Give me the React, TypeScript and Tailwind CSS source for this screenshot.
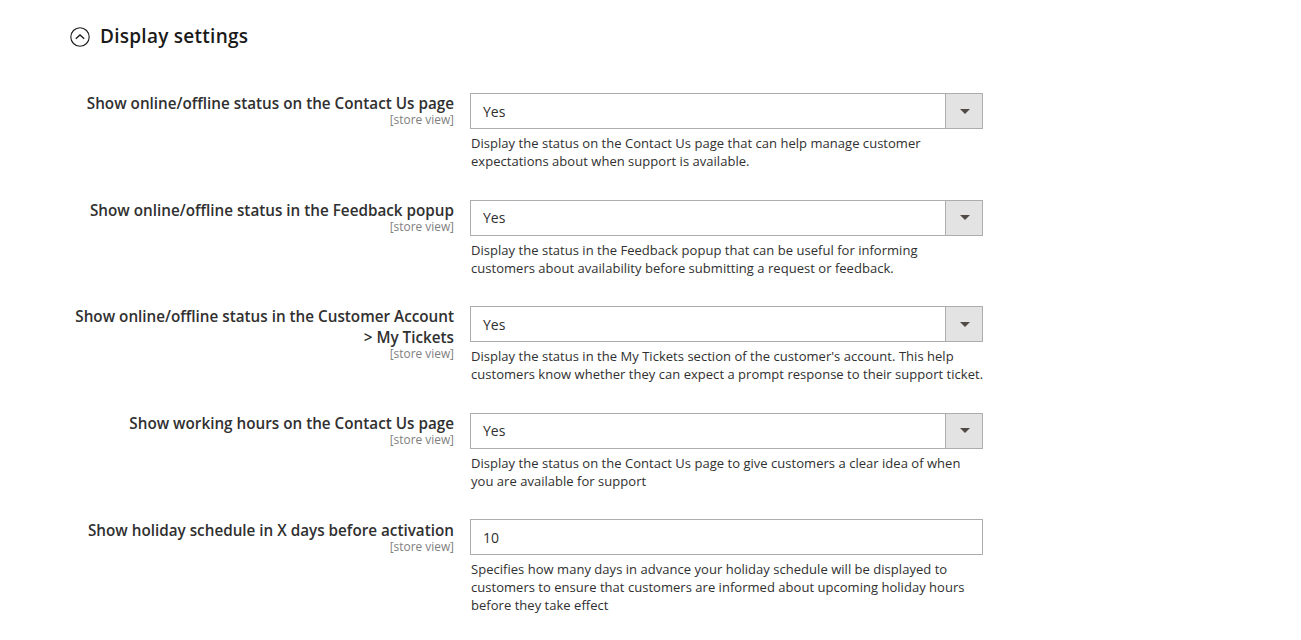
import React from "react";

const rows = [
  {
    label: "Show online/offline status on the Contact Us page",
    value: "Yes",
    note: ["Display the status on the Contact Us page that can help manage customer", "expectations about when support is available."],
  },
  {
    label: "Show online/offline status in the Feedback popup",
    value: "Yes",
    note: ["Display the status in the Feedback popup that can be useful for informing", "customers about availability before submitting a request or feedback."],
  },
  {
    label: "Show online/offline status in the Customer Account > My Tickets",
    value: "Yes",
    note: ["Display the status in the My Tickets section of the customer's account. This help", "customers know whether they can expect a prompt response to their support ticket."],
  },
  {
    label: "Show working hours on the Contact Us page",
    value: "Yes",
    note: ["Display the status on the Contact Us page to give customers a clear idea of when", "you are available for support"],
  },
  {
    label: "Show holiday schedule in X days before activation",
    value: "10",
    input: true,
    note: ["Specifies how many days in advance your holiday schedule will be displayed to", "customers to ensure that customers are informed about upcoming holiday hours", "before they take effect"],
  },
];

export default function App() {
  return (
    <div className="h-[640px] overflow-hidden bg-white pl-[70px] pt-[25px] font-['Open_Sans',sans-serif] text-[#303030]">
      <div className="flex h-[23px] items-center gap-[10px]">
        <svg width="20" height="20" viewBox="0 0 20 20" fill="none" stroke="#1a1a1a" strokeWidth="1.1">
          <circle cx="10" cy="10" r="9.2" />
          <path d="M5.8 11.8 10 8l4.2 3.8" strokeWidth="1.3" />
        </svg>
        <h2 className="text-[19px] font-semibold leading-[23px] tracking-[0.26px] text-[#1a1a1a]">Display settings</h2>
      </div>
      <div className="mt-[45px] flex flex-col">
        {rows.map((r, i) => (
          <div key={i} className="flex pb-[29.6px] last:pb-0">
            <div className="w-[384px] pt-[0.2px] text-right">
              <div className="text-[15.25px] font-semibold leading-[21px]">{r.label}</div>
              <div className="mt-[-2px] text-[11.9px] leading-[14px] text-[#808080]">[store view]</div>
            </div>
            <div className="ml-[16px] w-[513px]">
              {r.input ? (
                <div className="flex h-[36px] items-center border border-[#adadad] bg-white pl-[12px] text-[14px]">{r.value}</div>
              ) : (
                <div className="flex h-[36px] items-center border border-[#adadad] bg-white text-[14px]">
                  <span className="flex-1 pl-[12px]">{r.value}</span>
                  <span className="flex h-full w-[37px] items-center justify-center border-l border-[#adadad] bg-[#e3e3e3]">
                    <span className="ml-[1px] h-0 w-0 border-x-[5px] border-t-[5px] border-x-transparent border-t-[#514943]" />
                  </span>
                </div>
              )}
              <div className="mt-[5px] pl-[1px] text-[13px] leading-[18px] tracking-[0.03px]">
                {r.note.map((n, j) => (
                  <div key={j} className="whitespace-nowrap">{n}</div>
                ))}
              </div>
            </div>
          </div>
        ))}
      </div>
    </div>
  );
}
